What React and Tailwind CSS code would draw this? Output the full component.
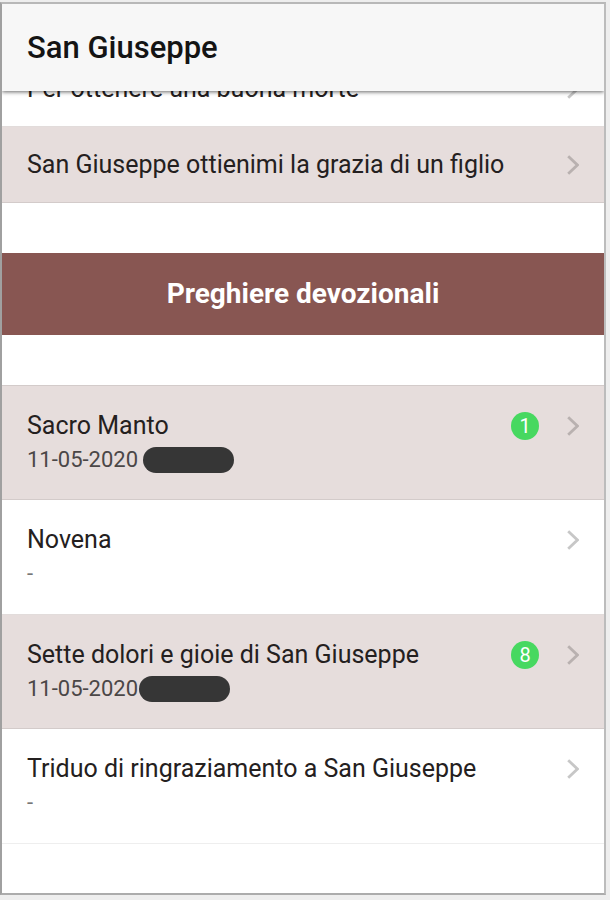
import React from 'react';

const Chevron = ({ className }) => (
  <svg viewBox="0 0 12 20" className={`w-3 h-5 shrink-0 ${className}`} fill="none" stroke="currentColor" strokeWidth="2.8" aria-hidden="true">
    <path d="M1.2 1.2 L10.4 10 L1.2 18.8" />
  </svg>
);

const devotions = [
  { title: 'Sacro Manto', date: '11-05-2020', count: 1, shaded: true, pill: 'ml-[5px]' },
  { title: 'Novena', date: '-' },
  { title: 'Sette dolori e gioie di San Giuseppe', date: '11-05-2020', count: 8, shaded: true, pill: 'ml-px' },
  { title: 'Triduo di ringraziamento a San Giuseppe', date: '-' },
];

const PrayerRow = ({ title, shaded }) => (
  <li>
    <a
      href="#"
      className={`flex items-center justify-between h-[76px] px-[25px] border-b ${
        shaded ? 'bg-[#e6dddc] border-[#d3cbca]' : 'bg-white border-[#e2dcdb]'
      }`}
    >
      <span className="text-[25px] leading-8 text-[#242020]">{title}</span>
      <Chevron className={shaded ? 'text-[#b9b1b0]' : 'text-[#c7c7c7]'} />
    </a>
  </li>
);

const DevotionRow = ({ title, date, count, shaded, pill }) => (
  <li className="group">
    <a
      href="#"
      className={`block pt-6 px-[25px] border-b group-last:border-[#eeeeee] ${
        shaded ? 'pb-[21px] bg-[#e6dddc] border-[#d3cbca]' : 'pb-[22px] bg-white border-[#e2dcdb]'
      }`}
    >
      <div className="flex items-center h-8">
        <span className="flex-1 text-[25px] leading-8 text-[#242020]">{title}</span>
        {count && (
          <span className="flex items-center justify-center size-7 mr-7 rounded-full bg-[#47d860] text-white text-[20px] leading-7">
            {count}
          </span>
        )}
        <Chevron className={shaded ? 'text-[#b9b1b0]' : 'text-[#c7c7c7]'} />
      </div>
      <div className="flex items-center h-9">
        <span className={`text-[22px] leading-9 ${pill ? 'text-[#4b4747]' : 'text-[#777777]'}`}>{date}</span>
        {pill && <span className={`w-[91px] h-[26px] rounded-full bg-[#363636] ${pill}`} />}
      </div>
    </a>
  </li>
);

const App = () => {
  return (
    <div className="min-h-screen bg-[#eeeeee] pt-0.5 pr-1 pb-1 font-[Roboto,sans-serif]">
      <div className="flex flex-col min-h-[893px] overflow-hidden bg-white border-2 border-l-[#a0a0a0] border-t-[#b8b8b8] border-r-[#bcbcbc] border-b-[#acacac]">
        <header className="relative z-10 flex items-center h-[87px] px-[25px] bg-[#f7f7f7] shadow-[0_1px_4px_rgba(0,0,0,0.6)]">
          <h1 className="text-[31px] leading-9 font-medium text-[#141414]">San Giuseppe</h1>
        </header>

        <main>
          {/* the list is scrolled, its first row sits partly under the header */}
          <ul className="-mt-10">
            <PrayerRow title="Per ottenere una buona morte" />
            <PrayerRow title="San Giuseppe ottienimi la grazia di un figlio" shaded />
          </ul>

          <h2 className="my-[50px] py-[23px] bg-[#885652] text-center text-[28px] leading-9 font-bold text-white">
            Preghiere devozionali
          </h2>

          <ul className="border-t border-[#d3cbca]">
            {devotions.map((item) => (
              <DevotionRow key={item.title} {...item} />
            ))}
          </ul>
        </main>
      </div>
    </div>
  );
};

export default App;
